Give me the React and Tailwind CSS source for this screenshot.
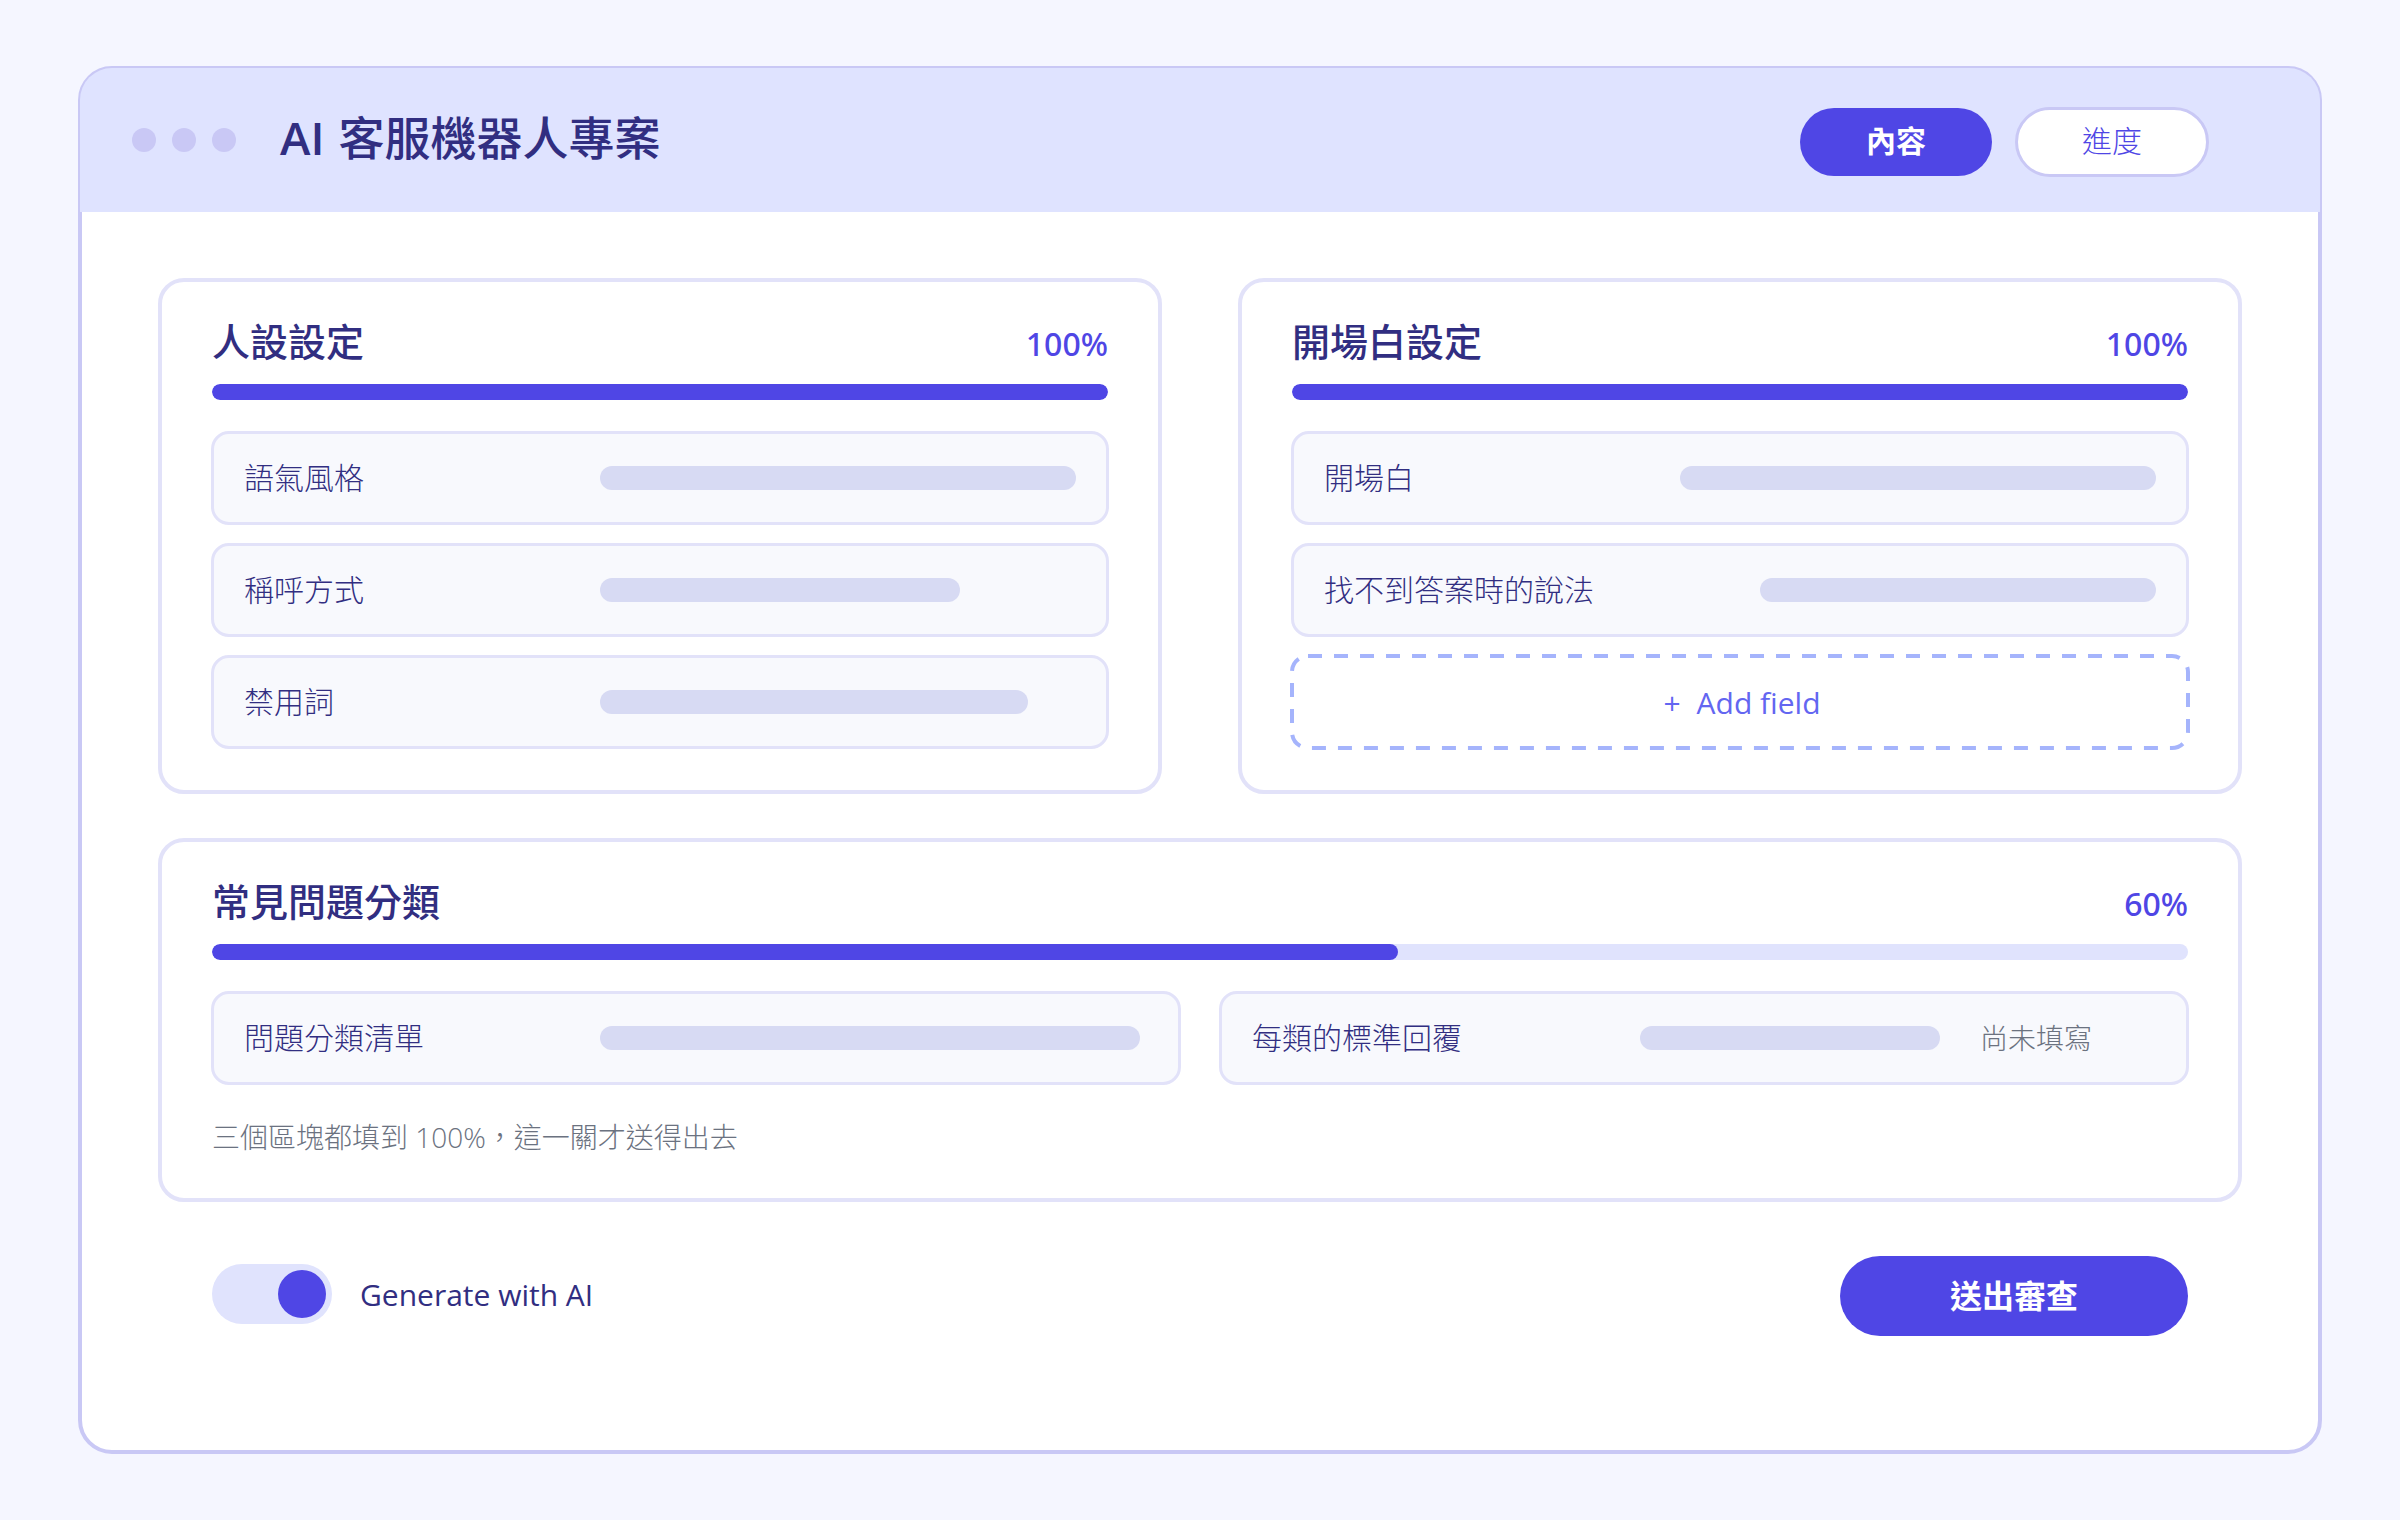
import React, { useState } from 'react';

const tabs = ['內容', '進度'];

function ProgressBar({ label, value }) {
  return (
    <div
      role="progressbar"
      aria-label={label}
      aria-valuenow={value}
      className="h-4 rounded-full bg-[#e0e3fd] overflow-hidden"
    >
      <div className="h-full rounded-full bg-[#4f46e5]" style={{ width: `${value}%` }} />
    </div>
  );
}

function Card({ title, value, children }) {
  return (
    <section className="border-4 border-[#e2e2f9] rounded-[26px] bg-white px-[50px] pt-[30px] pb-[41px]">
      <div className="flex items-baseline justify-between mb-3.5">
        <h2 className="text-[38px] leading-[58px] font-medium text-[#312e81]">{title}</h2>
        <span className="font-['Noto_Sans',sans-serif] text-[32px] leading-10 font-medium text-[#4f46e5]">
          {value}%
        </span>
      </div>
      <ProgressBar label={title} value={value} />
      {children}
    </section>
  );
}

function Field({ label, labelWidth = 'w-[356px]', barWidth = 'w-full', note }) {
  return (
    <div className="h-[94px] flex items-center border-3 border-[#e2e2f9] rounded-[18px] bg-[#f8f9fd] px-[30px]">
      <span className={`${labelWidth} shrink-0 pb-0.5 text-[30px] font-light text-[#312e81]`}>{label}</span>
      <div className={`${barWidth} h-6 rounded-full bg-[#d7daf3]`} />
      {note && <span className="ml-10 shrink-0 text-[28px] font-light text-[#6b7280]">{note}</span>}
    </div>
  );
}

function AddFieldButton() {
  return (
    <button
      type="button"
      className="relative h-[94px] flex items-center justify-center gap-4 pl-1 text-[30px] text-[#6366f1]"
    >
      <svg className="absolute inset-px w-[calc(100%-2px)] h-[92px] overflow-visible" aria-hidden="true">
        <rect
          width="100%" height="100%" rx="16"
          fill="none" stroke="#a5b4fc" strokeWidth="4" strokeDasharray="14 12"
        />
      </svg>
      <span>+</span>
      <span>Add field</span>
    </button>
  );
}

function App() {
  const [activeTab, setActiveTab] = useState('內容');
  const [useAi, setUseAi] = useState(true);

  return (
    <div
      lang="zh-Hant"
      className="min-h-screen flex flex-col bg-[#f5f6ff] px-[78px] py-[66px] font-['Open_Sans','Noto_Sans_CJK_TC',sans-serif]"
    >
      <div className="flex-1 border-4 border-[#c9c8f5] rounded-[34px] bg-white">
        <header className="-mx-0.5 -mt-0.5 h-36 flex items-center rounded-t-[32px] bg-[#dfe3ff] pl-[52px] pr-28">
          <div className="flex gap-4 mr-11">
            <span className="size-6 rounded-full bg-[#c9c8f5]" />
            <span className="size-6 rounded-full bg-[#c9c8f5]" />
            <span className="size-6 rounded-full bg-[#c9c8f5]" />
          </div>
          <h1 className="pb-1.5 text-[46px] leading-none font-medium text-[#312e81]">
            <span className="mr-0.5 font-semibold">AI</span> 客服機器人專案
          </h1>
          <nav className="ml-auto pt-1 flex gap-6">
            {tabs.map(tab => (
              <button
                key={tab}
                type="button"
                onClick={() => setActiveTab(tab)}
                className={
                  tab === activeTab
                    ? 'w-48 h-[68px] rounded-full bg-[#4f46e5] pb-1 text-[30px] font-bold text-white'
                    : '-m-px w-[194px] h-[70px] rounded-full border-3 border-[#c9c8f5] bg-white pb-1 text-[30px] font-light text-[#4f46e5]'
                }
              >
                {tab}
              </button>
            ))}
          </nav>
        </header>

        <main className="px-[76px] pt-[66px]">
          <div className="grid grid-cols-2 gap-x-[76px]">
            <Card title="人設設定" value={100}>
              <div className="-mx-px mt-[31px] flex flex-col gap-[18px]">
                <Field label="語氣風格" />
                <Field label="稱呼方式" barWidth="w-[360px]" />
                <Field label="禁用詞" barWidth="w-[428px]" />
              </div>
            </Card>
            <Card title="開場白設定" value={100}>
              <div className="-mx-px mt-[31px] flex flex-col gap-[18px]">
                <Field label="開場白" />
                <Field label="找不到答案時的說法" labelWidth="w-[436px]" />
                <AddFieldButton />
              </div>
            </Card>
          </div>

          <div className="mt-11">
            <Card title="常見問題分類" value={60}>
              <div className="-mx-px mt-[31px] grid grid-cols-2 gap-[38px]">
                <Field label="問題分類清單" barWidth="w-[540px]" />
                <Field
                  label="每類的標準回覆"
                  labelWidth="w-[388px]"
                  barWidth="w-[300px]"
                  note="尚未填寫"
                />
              </div>
              <p className="mt-8 text-[28px] leading-10 font-light text-[#6b7280]">
                三個區塊都填到 100%，這一關才送得出去
              </p>
            </Card>
          </div>

          <div className="flex items-center justify-between px-[54px] pt-[54px]">
            <label className="flex items-center gap-7 pb-1 text-[30px] text-[#312e81]">
              <input
                type="checkbox"
                role="switch"
                checked={useAi}
                onChange={e => setUseAi(e.target.checked)}
                className="appearance-none w-[120px] h-[60px] flex items-center justify-start checked:justify-end rounded-full bg-[#e0e3fd] px-1.5 before:size-12 before:rounded-full before:bg-[#4f46e5]"
              />
              Generate with AI
            </label>
            <button
              type="button"
              className="w-[348px] h-20 rounded-full bg-[#4f46e5] text-[32px] font-bold text-white"
            >
              送出審查
            </button>
          </div>
        </main>
      </div>
    </div>
  );
}

export default App;
